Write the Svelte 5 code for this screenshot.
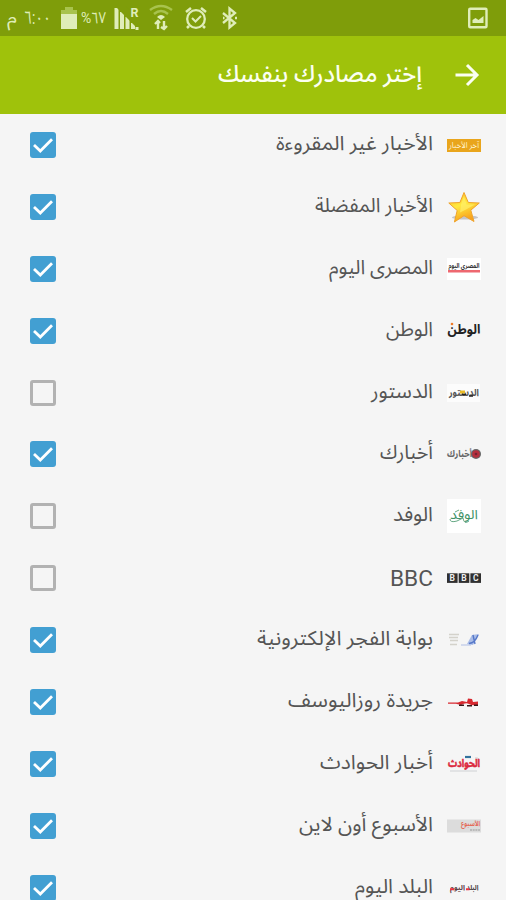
<script lang="ts">
  type Source = {
    id: string;
    name: string;
    width: number;
    checked: boolean;
  };

  let sources: Source[] = $state([
    { id: 'unread', name: 'الأخبار غير المقروءة', width: 157, checked: true },
    { id: 'favorites', name: 'الأخبار المفضلة', width: 118, checked: true },
    { id: 'masry', name: 'المصرى اليوم', width: 104, checked: true },
    { id: 'watan', name: 'الوطن', width: 47, checked: true },
    { id: 'dostor', name: 'الدستور', width: 62, checked: false },
    { id: 'akhbarak', name: 'أخبارك', width: 53, checked: true },
    { id: 'wafd', name: 'الوفد', width: 40, checked: false },
    { id: 'bbc', name: 'BBC', width: 43, checked: false },
    { id: 'fagr', name: 'بوابة الفجر الإلكترونية', width: 176, checked: true },
    { id: 'rose', name: 'جريدة روزاليوسف', width: 145, checked: true },
    { id: 'hawadeth', name: 'أخبار الحوادث', width: 113, checked: true },
    { id: 'osboa', name: 'الأسبوع أون لاين', width: 134, checked: true },
    { id: 'balad', name: 'البلد اليوم', width: 78, checked: true }
  ]);
</script>

{#snippet fitted(text: string, width: number, size: number, height: number, baseline: number)}
  <svg class="fitted" {width} {height} direction={text === 'BBC' ? 'ltr' : 'rtl'}>
    <text
      x={text === 'BBC' ? 0 : width}
      y={baseline}
      font-size={size}
      textLength={width}
      lengthAdjust="spacingAndGlyphs">{text}</text
    >
  </svg>
{/snippet}

{#snippet logo(id: string)}
  <svg class="logo" width="34" height="34" viewBox="0 0 34 34">
    {#if id === 'unread'}
      <rect y="11" width="34" height="13" fill="#e9a51c" />
      <text x="17" y="20" font-size="8" fill="#fff3cf" textLength="30" lengthAdjust="spacingAndGlyphs">آخر الأخبار</text>
    {:else if id === 'favorites'}
      <defs>
        <linearGradient id="gold" x1="0" y1="0" x2="0.4" y2="1">
          <stop offset="0" stop-color="#ffb51f" />
          <stop offset="0.5" stop-color="#ffe93f" />
          <stop offset="1" stop-color="#f9a11b" />
        </linearGradient>
      </defs>
      <ellipse cx="18" cy="27.5" rx="13" ry="2" fill="#c4c4c8" />
      <path
        d="M17 2.5 21.3 12.5 32.3 13 23.8 20.2 27 31.5 17 25.7 7.4 32 10.2 20.5 1.8 13 12.9 12.5z"
        fill="url(#gold)"
        stroke="#efa32c"
      />
      <path d="M17 6 19.5 14.5 28 14.5 19 19.5 13 22.5 14 14.5z" fill="#fff06a" opacity="0.7" />
    {:else if id === 'masry'}
      <rect y="6" width="34" height="22" fill="#fff" />
      <text x="17" y="16" font-size="6.5" font-weight="bold" fill="#333" textLength="31" lengthAdjust="spacingAndGlyphs">المصرى اليوم</text>
      <rect x="1" y="18" width="32" height="2.5" fill="#ee6870" />
    {:else if id === 'watan'}
      <text x="17" y="20" font-size="13" font-weight="bold" fill="#222" textLength="33" lengthAdjust="spacingAndGlyphs">الوطن</text>
      <circle cx="5" cy="10" r="1.3" fill="#f07c28" />
    {:else if id === 'dostor'}
      <rect y="8" width="33" height="18" fill="#fcfcfc" />
      <text x="17" y="20" font-size="10" font-weight="bold" fill="#555" textLength="30" lengthAdjust="spacingAndGlyphs">الدستور</text>
      <rect x="13" y="14.5" width="5" height="3" fill="#eabb27" />
      <path d="M15 18.5h4M22 20h4" stroke="#222" stroke-width="1.6" />
    {:else if id === 'akhbarak'}
      <text x="12.5" y="20" font-size="10" font-weight="bold" fill="#666" textLength="25" lengthAdjust="spacingAndGlyphs">أخبارك</text>
      <circle cx="29" cy="17" r="5" fill="#666" />
      <circle cx="29" cy="17" r="3.8" fill="#b52e3d" />
      <circle cx="29" cy="17" r="1.3" fill="#752331" />
    {:else if id === 'wafd'}
      <rect width="34" height="34" fill="#fff" />
      <text x="17" y="20" font-size="13" fill="#3f9368" textLength="28" lengthAdjust="spacingAndGlyphs">الوفد</text>
      <path d="M3 20Q3 24 10 22L16 19Q17 26 22 22M8 13l4-2" fill="none" stroke="#65a884" />
    {:else if id === 'bbc'}
      {#each ['B', 'B', 'C'] as letter, i}
        <rect x={i * 11.7} y="12.3" width="10.6" height="9.6" fill="#303030" />
        <text class="latin" x={i * 11.7 + 5.3} y="20.2" font-size="8.5" font-weight="bold" fill="#eee">{letter}</text>
      {/each}
    {:else if id === 'fagr'}
      <path d="M2 11.5h10M2 14.5h9M3 17.5h8M3 21.5h7" stroke="#d4d2cb" stroke-width="1.6" />
      <path d="M14 22h10" stroke="#bdc9e8" stroke-width="1.2" />
      <path d="M20 21 25 12 32 11 26 22z" fill="#a9bce7" />
      <path d="M22 20.5Q28 20 31 12M26 12 28 21" fill="none" stroke="#5678c9" stroke-width="1.4" />
    {:else if id === 'rose'}
      <path
        d="M1 17.5H11L15 16 20 17 21 13.5 25 14 26 17 31 16.5V20Q25 21 22 19T14 20L9 18.8H1z"
        fill="#d72930"
      />
      <path d="M12 20.3h5M20 20.8h5M27 20.3h4" stroke="#371719" stroke-width="1.5" />
    {:else if id === 'hawadeth'}
      <path d="M3 24h27M28 11q5-1 4 4" fill="none" stroke="#cfd1d4" />
      <text x="17" y="20" font-size="11" font-weight="bold" fill="#dc2a3f" stroke="#dc2a3f" stroke-width="0.5" textLength="32" lengthAdjust="spacingAndGlyphs">الحوادث</text>
      <path d="M18 10h6" stroke="#33729d" stroke-width="2.2" />
    {:else if id === 'osboa'}
      <rect y="10.5" width="34" height="13" fill="#dcdcdc" />
      <text x="23.5" y="17" font-size="7" font-weight="bold" fill="#e46a59" textLength="19" lengthAdjust="spacingAndGlyphs">الأسبوع</text>
      <path d="M23 21h10" stroke="#999" stroke-dasharray="2 0.7" />
    {:else if id === 'balad'}
      <text x="25.5" y="19" font-size="7.5" font-weight="bold" fill="#4b4043" textLength="12" lengthAdjust="spacingAndGlyphs">البلد</text>
      <text x="10.5" y="19" font-size="7.5" font-weight="bold" fill="#5b4146" textLength="15" lengthAdjust="spacingAndGlyphs">اليوم</text>
      <path d="M3 18.3h4M19 18.3h3.5" stroke="#ed3342" stroke-width="2" />
    {/if}
  </svg>
{/snippet}

<div class="screen">
  <div class="status">
    <div class="clock">
      {@render fitted('م', 10, 18, 36, 23)}
      {@render fitted('٦:٠٠', 27, 18, 36, 24)}
    </div>
    <svg class="battery" width="16" height="24" viewBox="0 0 16 24">
      <path d="M4 1h8v3h4v5H0V4h4z" fill="#a8c34d" />
      <path d="M0 8h16v15H0z" fill="#dfedb9" />
    </svg>
    <div class="percent">
      <span>%</span>
      {@render fitted('٦٧', 15, 16, 36, 23)}
    </div>
    <svg class="signal" width="26" height="25" viewBox="0 0 26 25">
      <path d="M1.5 2v21M7 6v17M12.5 11v12M18 17v6" stroke="#dfedb9" stroke-width="4" />
      <path d="M0 0 23 23V10L10 0z" fill="#7f9d0a" />
      <path d="M22 21v3" stroke="#dfedb9" stroke-width="3" />
      <text class="latin" x="19.5" y="10.5" font-size="12.5" font-weight="bold" fill="#dfedb9">R</text>
    </svg>
    <svg class="wifi" width="24" height="26" viewBox="0 0 24 26" fill="none">
      <path d="M1 5Q12-3 23 5M5 9Q12 3 19 9" stroke="#a8c34d" stroke-width="2.4" />
      <path d="M8 12Q12 8 16 12L12 15z" fill="#dfedb9" />
      <path d="M9 24v-8M6 19l3-3 2 2M15 16v8M12 22l3 2 3-3" stroke="#dfedb9" stroke-width="2.4" />
    </svg>
    <svg class="alarm" width="24" height="24" viewBox="0 0 24 24" fill="none" stroke="#dfedb9">
      <circle cx="12" cy="13" r="8.8" stroke-width="2.3" />
      <path d="m2 6 5-4M17 2l5 4M5 20l-2 2M19 20l2 2" stroke-width="2.5" />
      <path d="m8 12 3.5 3.5L17 10" stroke-width="2" />
    </svg>
    <svg class="bluetooth" width="16" height="24" viewBox="0 0 16 24" fill="none" stroke="#dfedb9" stroke-width="2.3">
      <path d="m1 7 12 10-5.5 4.5v-19L13 7 1 17" />
      <path d="M1 12h1.5M13 12h2" />
    </svg>
    <svg class="picture" width="20" height="22" viewBox="0 0 20 22">
      <rect x="1.2" y="1.7" width="17.3" height="18.6" rx="1" fill="none" stroke="#dfedb9" stroke-width="2.4" />
      <path d="M4.5 16v-3l3-2 3 2 5-4v7z" fill="#dfedb9" />
    </svg>
  </div>

  <header>
    <h1>{@render fitted('إختر مصادرك بنفسك', 204, 24, 78, 45.5)}</h1>
    <svg class="arrow" width="24" height="24" viewBox="0 0 24 24">
      <path d="M0.5 12h21M12 2l10 10-10 10" fill="none" stroke="#fbfff0" stroke-width="3" />
    </svg>
  </header>

  <main>
    {#each sources as source (source.id)}
      <label>
        <input type="checkbox" bind:checked={source.checked} />
        <span class="box" class:checked={source.checked}>
          {#if source.checked}
            <svg width="26" height="26" viewBox="0 0 26 26">
              <path d="m4 13 6.3 6L22 7.2" fill="none" stroke="#fff" stroke-width="2.8" />
            </svg>
          {/if}
        </span>
        <span class="name">
          {@render fitted(source.name, source.width, source.id === 'bbc' ? 22.5 : 20, 62, source.id === 'bbc' ? 38.5 : 35.5)}
        </span>
        {@render logo(source.id)}
      </label>
    {/each}
  </main>
</div>

<style>
  :global(body) {
    margin: 0;
    overflow: hidden;
    background: #f5f5f5;
  }

  .screen {
    width: 506px;
    height: 900px;
    overflow: hidden;
    background: #f5f5f5;
    font-family: Roboto, 'Noto Sans Arabic', 'DejaVu Sans', sans-serif;
  }

  svg {
    display: block;
    flex: none;
    overflow: visible;
  }

  .fitted {
    fill: currentColor;
  }

  .status {
    display: flex;
    align-items: center;
    box-sizing: border-box;
    height: 36px;
    padding: 0 18px 0 7px;
    background: #7f9d0a;
    color: #dfedb9;
  }

  .clock {
    display: flex;
    gap: 7px;
  }

  .battery {
    margin-left: 10px;
  }

  .percent {
    display: flex;
    align-items: center;
    margin-left: 4px;
    font-size: 14px;
  }

  .signal {
    margin-left: 9px;
  }

  .wifi {
    margin-left: 8px;
  }

  .alarm {
    margin-left: 11px;
  }

  .bluetooth {
    margin-left: 14px;
  }

  .picture {
    margin-left: auto;
  }

  header {
    display: flex;
    align-items: center;
    justify-content: flex-end;
    gap: 33px;
    box-sizing: border-box;
    height: 78px;
    padding-right: 27px;
    background: #9fc20b;
    color: #fbfff0;
  }

  h1 {
    margin: 0;
    font-weight: 500;
  }

  label {
    display: flex;
    align-items: center;
    height: 61.9px;
    padding: 0 25px 0 30px;
    color: #555;
  }

  input {
    display: none;
  }

  .box {
    box-sizing: border-box;
    width: 26px;
    height: 26px;
    border: 3px solid #b2b2b2;
    border-radius: 3px;
  }

  .box.checked {
    border: none;
    background: #429fd2;
  }

  .name {
    margin-left: auto;
    margin-right: 14px;
  }

  .logo text,
  .latin {
    text-anchor: middle;
  }
</style>
